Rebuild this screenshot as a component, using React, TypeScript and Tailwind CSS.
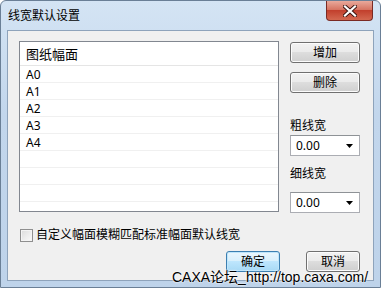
import React from "react";

const FONT = "font-['Noto_Sans','Noto_Sans_CJK_SC',sans-serif]";

function WinButton({ label, primary }: { label: string; primary?: boolean }) {
  return (
    <div
      className={[
        "flex h-[21px] items-center justify-center rounded-[3px] border text-[12px] leading-none text-black",
        primary
          ? "border-[#3c7fb1] bg-[linear-gradient(#eaf6fd_0%,#d9f0fc_45%,#bee6fd_50%,#a7d9f5_100%)] shadow-[0_0_0_1px_#bfe6fb_inset]"
          : "border-[#707070] bg-[linear-gradient(#f2f2f2_0%,#ebebeb_45%,#dddddd_50%,#cfcfcf_100%)] shadow-[0_0_0_1px_#fcfcfc_inset]",
      ].join(" ")}
    >
      {label}
    </div>
  );
}

function Combo() {
  return (
    <div className="flex h-[21px] w-[70px] items-center justify-between border border-[#abadb3] border-t-[#8e9296] bg-white pl-[5px] pr-[6px] text-[12px] leading-none text-black">
      <span>0.00</span>
      <svg width="7" height="4" viewBox="0 0 7 4">
        <path d="M0 0h7L3.5 4z" fill="#000" />
      </svg>
    </div>
  );
}

const ROWS = ["A0", "A1", "A2", "A3", "A4", "", "", ""];

export default function App() {
  return (
    <div
      className={`relative h-[288px] w-[381px] overflow-hidden rounded-t-[6px] border border-[#6a7f96] bg-[linear-gradient(180deg,#d4e4f4_0%,#c2d6ec_40%,#bed3ea_100%)] ${FONT}`}
    >
      {/* title bar */}
      <div className="flex h-[29px] items-center justify-between pl-[7px]">
        <span className="text-[12px] leading-none text-black">线宽默认设置</span>
        <div className="mr-[7px] flex h-[20px] w-[47px] items-center justify-center self-start rounded-b-[4px] border border-t-0 border-[#7a2a24] bg-[linear-gradient(#e9a99b_0%,#d67563_45%,#c2402d_50%,#d36850_100%)]">
          <svg width="14" height="12" viewBox="0 0 14 12">
            <path
              d="M2 1.5l5 4.5 5-4.5M2 10.5l5-4.5 5 4.5"
              stroke="#3a1410"
              strokeWidth="4"
              fill="none"
              strokeLinecap="square"
            />
            <path
              d="M2 1.5l5 4.5 5-4.5M2 10.5l5-4.5 5 4.5"
              stroke="#fff"
              strokeWidth="2.2"
              fill="none"
              strokeLinecap="square"
            />
          </svg>
        </div>
      </div>

      {/* client area */}
      <div className="mx-[6px] h-[251px] border border-[#8ea3bb] bg-[#f0f0f0] pl-[11px] pt-[10px] text-[12px] text-black">
        <div className="flex gap-[11px]">
          {/* list */}
          <div className="h-[171px] w-[260px] overflow-hidden border border-[#828790] bg-white">
            <div className="flex h-[24px] items-center border-b border-[#e5e5e5] pl-[6px] pt-[2px] text-[13px]">
              图纸幅面
            </div>
            {ROWS.map((r, i) => (
              <div
                key={i}
                className="flex h-[17px] items-center border-b border-[#f0f0f0] pl-[6px] pt-[1px] text-[12px] leading-none"
              >
                {r}
              </div>
            ))}
          </div>

          {/* right column */}
          <div className="flex w-[70px] flex-col">
            <div className="mt-[1px]">
              <WinButton label="增加" />
            </div>
            <div className="mt-[9px]">
              <WinButton label="删除" />
            </div>
            <div className="mt-[25px] h-[16px] leading-[16px]">粗线宽</div>
            <div className="mt-[1px]">
              <Combo />
            </div>
            <div className="mt-[10px] h-[16px] leading-[16px]">细线宽</div>
            <div className="mt-[10px]">
              <Combo />
            </div>
          </div>
        </div>

        {/* checkbox */}
        <div className="mt-[14px] flex items-center gap-[3px] pl-[1px]">
          <div className="h-[13px] w-[13px] border border-[#8f8f8f] bg-[linear-gradient(135deg,#dcdcdc,#fbfbfb)] shadow-[inset_0_0_0_1px_#f4f4f4]" />
          <span className="leading-[16px]">自定义幅面模糊匹配标准幅面默认线宽</span>
        </div>

        {/* buttons */}
        <div className="mt-[8px] flex justify-end gap-[26px] pr-[13px]">
          <div className="w-[54px]">
            <WinButton label="确定" primary />
          </div>
          <div className="w-[54px]">
            <WinButton label="取消" />
          </div>
        </div>
      </div>

      {/* watermark */}
      <div className="absolute left-[171px] top-[267px] whitespace-nowrap font-['Liberation_Sans','Noto_Sans_CJK_SC',sans-serif] text-[14px] leading-[18px] text-black [text-shadow:0_0_2px_#fff,0_0_2px_#fff]">
        CAXA论坛_http://top.caxa.com/
      </div>
    </div>
  );
}
